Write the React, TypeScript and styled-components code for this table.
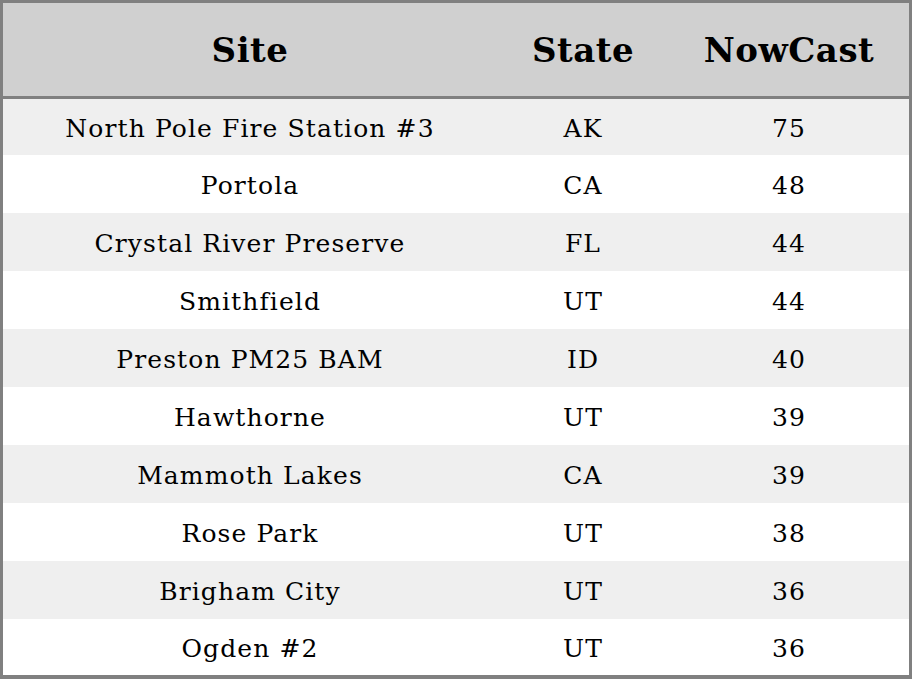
import styled, { createGlobalStyle } from 'styled-components';

const GlobalStyle = createGlobalStyle`
  html, body {
    margin: 0;
    padding: 0;
    background: #ffffff;
  }
  body {
    font-family: "DejaVu Serif", serif;
    color: #000;
  }
`;

const Frame = styled.div`
  width: 912px;
  height: 679px;
  box-sizing: border-box;
  border: 3px solid #808080;
  border-bottom-width: 4px;
  overflow: hidden;
  display: flex;
  flex-direction: column;
`;

const HeaderRow = styled.div`
  display: grid;
  grid-template-columns: 494px 172px 1fr;
  height: 93px;
  flex: none;
  background: #d0d0d0;
  border-bottom: 3px solid #808080;
`;

const HeadCell = styled.div`
  display: flex;
  align-items: center;
  justify-content: center;
  font-size: 34px;
  font-weight: bold;
  letter-spacing: 0.5px;
`;

const Row = styled.div<{ $odd: boolean; $h: number }>`
  display: grid;
  grid-template-columns: 494px 172px 1fr;
  height: ${p => p.$h}px;
  flex: none;
  background: ${p => (p.$odd ? '#efefef' : '#ffffff')};
`;

const Cell = styled.div`
  display: flex;
  align-items: center;
  justify-content: center;
  padding-top: 2px;
  font-size: 25px;
  letter-spacing: 1.1px;
`;

const rows = [
  ['North Pole Fire Station #3', 'AK', '75'],
  ['Portola', 'CA', '48'],
  ['Crystal River Preserve', 'FL', '44'],
  ['Smithfield', 'UT', '44'],
  ['Preston PM25 BAM', 'ID', '40'],
  ['Hawthorne', 'UT', '39'],
  ['Mammoth Lakes', 'CA', '39'],
  ['Rose Park', 'UT', '38'],
  ['Brigham City', 'UT', '36'],
  ['Ogden #2', 'UT', '36'],
];

export default function App() {
  return (
    <>
      <GlobalStyle />
      <Frame>
        <HeaderRow>
          <HeadCell>Site</HeadCell>
          <HeadCell>State</HeadCell>
          <HeadCell>NowCast</HeadCell>
        </HeaderRow>
        {rows.map((r, i) => (
          <Row key={i} $odd={i % 2 === 0} $h={i === 0 || i === rows.length - 1 ? 56 : 58}>
            <Cell>{r[0]}</Cell>
            <Cell>{r[1]}</Cell>
            <Cell>{r[2]}</Cell>
          </Row>
        ))}
      </Frame>
    </>
  );
}
